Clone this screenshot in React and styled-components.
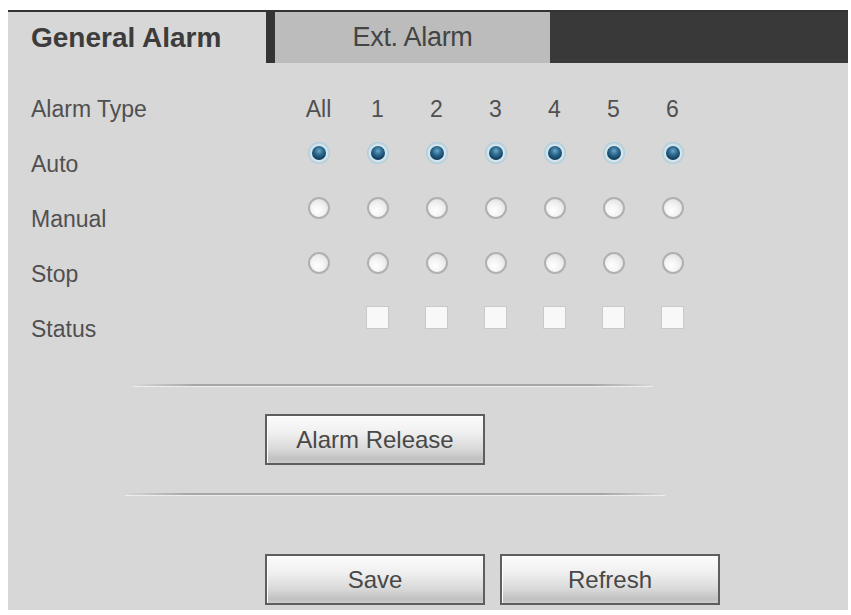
import React from "react";
import styled, { createGlobalStyle, css } from "styled-components";

const GlobalStyle = createGlobalStyle`
  html, body { margin: 0; padding: 0; background: #ffffff; }
  body { font-family: "Liberation Sans", Arial, sans-serif; }
  * { box-sizing: border-box; }
`;

const Page = styled.div`
  padding: 10px 0 5px 8px;
`;

const Panel = styled.div`
  width: 840px;
  height: 600px;
  background: #d7d7d7;
  border-top: 2px solid #333333;
  display: flex;
  flex-direction: column;
`;

const TabBar = styled.div`
  display: flex;
  height: 51px;
`;

const Tab = styled.div`
  height: 100%;
  line-height: 51px;
  color: #3c3c3c;
  ${(p) =>
    p.$active
      ? css`
          width: 258px;
          padding-left: 23px;
          font-size: 28px;
          font-weight: bold;
          background: #d7d7d7;
        `
      : css`
          width: 275px;
          text-align: center;
          font-size: 27px;
          background: #bcbcbc;
          letter-spacing: -0.3px;
          color: #444444;
        `}
`;

const TabDivider = styled.div`
  width: 9px;
  background: #343434;
`;

const TabFiller = styled.div`
  flex: 1;
  background: #393939;
`;

const Table = styled.div`
  margin: 19px 0 0 23px;
  display: grid;
  grid-template-columns: 258px repeat(7, 59px);
  grid-auto-rows: 55px;
  color: #505050;
  font-size: 23px;
`;

const Label = styled.div`
  line-height: 55px;
`;

const Header = styled.div`
  line-height: 55px;
  text-align: center;
`;

const Cell = styled.div`
  display: flex;
  align-items: center;
  justify-content: center;
  padding-bottom: 24px;
`;

const Radio = styled.span`
  width: 22px;
  height: 22px;
  border-radius: 50%;
  display: inline-flex;
  align-items: center;
  justify-content: center;
  ${(p) =>
    p.$checked
      ? css`
          background: radial-gradient(circle, #d9e6ec 52%, #a3c8d8 72%, #c6d8e0 100%);
          &::after {
            content: "";
            width: 14px;
            height: 14px;
            border-radius: 50%;
            background: radial-gradient(circle at 50% 35%, #6fa6c6 0%, #2d6c92 35%, #0f3b5c 75%, #0a2c46 100%);
          }
        `
      : css`
          border: 2px solid #b0b0b0;
          background: radial-gradient(circle at 40% 65%, #ffffff 0%, #f2f2f2 45%, #d6d6d6 100%);
        `}
`;

const Checkbox = styled.span`
  width: 23px;
  height: 23px;
  background: #f8f8f8;
  border: 1px solid #c9c9c9;
`;

const Separator = styled.div`
  margin-top: ${(p) => p.$top}px;
  margin-left: ${(p) => p.$left}px;
  width: ${(p) => p.$width}px;
  height: 2px;
  background: linear-gradient(
    to right,
    rgba(160, 160, 160, 0) 0%,
    #a6a6a6 12%,
    #a6a6a6 88%,
    rgba(160, 160, 160, 0) 100%
  );
  box-shadow: 0 1px 0 rgba(255, 255, 255, 0.55);
`;

const ButtonRow = styled.div`
  display: flex;
  gap: 15px;
  margin-top: ${(p) => p.$top}px;
  padding-left: 257px;
`;

const Button = styled.button`
  width: 220px;
  height: 51px;
  border: 2px solid #5e5e5e;
  box-shadow: inset 1px 1px 0 #ffffff;
  background: linear-gradient(
    to bottom,
    #fbfbfb 0%,
    #f0f0f0 35%,
    #d9d9d9 70%,
    #c0c0c0 92%,
    #cdcdcd 100%
  );
  color: #484848;
  font-family: "Liberation Sans", Arial, sans-serif;
  font-size: 24px;
  padding: 0;
  cursor: pointer;
`;

const columns = ["All", "1", "2", "3", "4", "5", "6"];
const radioRows = [
  { label: "Auto", checked: true },
  { label: "Manual", checked: false },
  { label: "Stop", checked: false },
];

export default function App() {
  return (
    <>
      <GlobalStyle />
      <Page>
        <Panel>
          <TabBar>
            <Tab $active>General Alarm</Tab>
            <TabDivider />
            <Tab>Ext. Alarm</Tab>
            <TabFiller />
          </TabBar>

          <Table>
            <Label>Alarm Type</Label>
            {columns.map((c) => (
              <Header key={c}>{c}</Header>
            ))}

            {radioRows.map((row) => (
              <React.Fragment key={row.label}>
                <Label>{row.label}</Label>
                {columns.map((c) => (
                  <Cell key={c}>
                    <Radio $checked={row.checked} />
                  </Cell>
                ))}
              </React.Fragment>
            ))}

            <Label>Status</Label>
            {columns.map((c) => (
              <Cell key={c}>{c !== "All" && <Checkbox />}</Cell>
            ))}
          </Table>

          <Separator $top={27} $left={125} $width={520} />
          <ButtonRow $top={28}>
            <Button>Alarm Release</Button>
          </ButtonRow>
          <Separator $top={28} $left={117} $width={540} />
          <ButtonRow $top={59}>
            <Button>Save</Button>
            <Button>Refresh</Button>
          </ButtonRow>
        </Panel>
      </Page>
    </>
  );
}
